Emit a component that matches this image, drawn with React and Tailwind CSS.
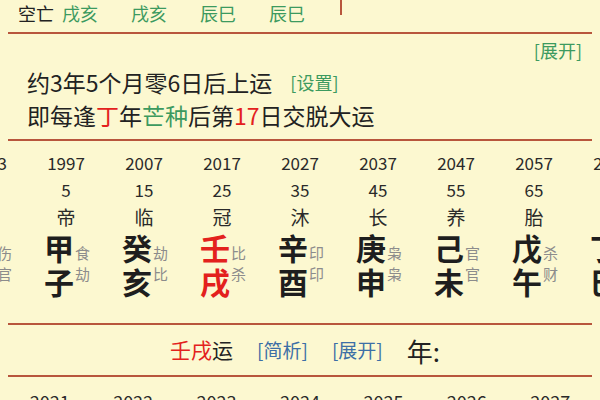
import React from "react";

const LINE = "bg-[#b8563c]";

const cols = [
  { year: "1993", age: "1", cs: "", stem: "乙", branch: "丑", s1: "伤", s2: "官" },
  { year: "1997", age: "5", cs: "帝", stem: "甲", branch: "子", s1: "食", s2: "劫" },
  { year: "2007", age: "15", cs: "临", stem: "癸", branch: "亥", s1: "劫", s2: "比" },
  { year: "2017", age: "25", cs: "冠", stem: "壬", branch: "戌", s1: "比", s2: "杀", red: true },
  { year: "2027", age: "35", cs: "沐", stem: "辛", branch: "酉", s1: "印", s2: "印" },
  { year: "2037", age: "45", cs: "长", stem: "庚", branch: "申", s1: "枭", s2: "枭" },
  { year: "2047", age: "55", cs: "养", stem: "己", branch: "未", s1: "官", s2: "官" },
  { year: "2057", age: "65", cs: "胎", stem: "戊", branch: "午", s1: "杀", s2: "财" },
  { year: "2067", age: "75", cs: "绝", stem: "丁", branch: "巳", s1: "食", s2: "伤" },
];

const years = ["2021", "2022", "2023", "2024", "2025", "2026", "2027"];

function Column({ c }) {
  const big = c.red ? "text-[#e3211d]" : "text-[#1e1e1e]";
  return (
    <div className="w-[78px] shrink-0 flex flex-col items-center">
      <div className="h-[26px] leading-[26px] text-[17px] text-[#2a2a2a]">{c.year}</div>
      <div className="h-[27px] leading-[27px] text-[17px] text-[#2a2a2a]">{c.age}</div>
      <div className="h-[27px] leading-[27px] text-[19px] text-[#2a2a2a]">{c.cs}</div>
      <div className="flex items-start gap-[1px] pl-[2px]">
        <div className={`flex flex-col text-[30px] leading-[34px] font-bold ${big}`}>
          <span>{c.stem}</span>
          <span>{c.branch}</span>
        </div>
        <div className="flex flex-col pt-[12px] text-[15px] leading-[21px] text-[#8c8c8c]">
          <span>{c.s1}</span>
          <span>{c.s2}</span>
        </div>
      </div>
    </div>
  );
}

export default function App() {
  return (
    <div
      className="w-[600px] h-[400px] overflow-hidden bg-[#fcf8d0] text-[#222]"
      style={{ fontFamily: '"Noto Sans CJK SC", "Noto Sans", sans-serif' }}
    >
      {/* top row */}
      <div className="flex h-[32px] items-start pl-[18px] text-[18px] leading-[26px]">
        <span className="w-[44px]">空亡</span>
        <span className="w-[69px] text-[#3c9a5f]">戌亥</span>
        <span className="w-[69px] text-[#3c9a5f]">戌亥</span>
        <span className="w-[69px] text-[#3c9a5f]">辰巳</span>
        <span className="w-[69px] text-[#3c9a5f]">辰巳</span>
        <span className={`ml-[2px] w-[2px] h-[15px] ${LINE}`} />
      </div>
      <div className={`mx-[8px] h-[2px] ${LINE}`} />

      <div className="flex justify-end pr-[18px] h-[32px] items-center text-[18px] text-[#3c9a5f]">
        [展开]
      </div>

      <div className="pl-[27px] text-[23px] leading-[33px] text-[#222]">
        <div className="flex items-center">
          <span>约3年5个月零6日后上运</span>
          <span className="ml-[18px] text-[18px] text-[#3c9a5f]">[设置]</span>
        </div>
        <div>
          即每逢<span className="text-[#e3211d]">丁</span>年
          <span className="text-[#3c9a5f]">芒种</span>后第
          <span className="text-[#e3211d]">17</span>日交脱大运
        </div>
      </div>
      <div className={`mx-[8px] mt-[7px] h-[2px] ${LINE}`} />

      {/* dayun columns */}
      <div className="flex ml-[-51px] pt-[9px] h-[182px]">
        {cols.map((c, i) => (
          <Column key={i} c={c} />
        ))}
      </div>
      <div className={`mx-[8px] h-[2px] ${LINE}`} />

      <div className="flex h-[50px] items-center justify-center gap-[24px] pl-[10px]">
        <span className="text-[21px]">
          <span className="text-[#e3211d]">壬戌</span>运
        </span>
        <span className="text-[19px] text-[#3d6fa6]">[简析]</span>
        <span className="text-[19px] text-[#3d6fa6]">[展开]</span>
        <span className="text-[26px]">年:</span>
      </div>
      <div className={`mx-[8px] h-[2px] ${LINE}`} />

      <div className="flex mx-[8px] pt-[12px]">
        {years.map((y) => (
          <div key={y} className="flex-1 text-center text-[18px] leading-[24px] text-[#2a2a2a]">
            {y}
          </div>
        ))}
      </div>
    </div>
  );
}
